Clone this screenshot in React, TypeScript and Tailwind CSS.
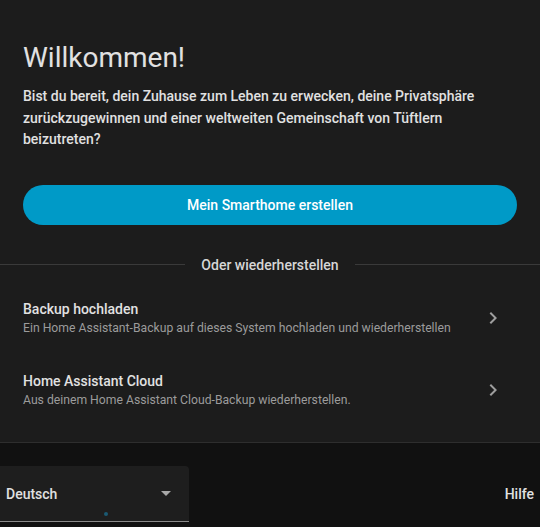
import React from "react"

const Chevron = () => (
  <svg viewBox="0 0 24 24" className="w-6 h-6 shrink-0" fill="#9e9e9e">
    <path d="M8.59,16.58L13.17,12L8.59,7.41L10,6L16,12L10,18L8.59,16.58Z" />
  </svg>
)

function RestoreItem({ title, sub }: { title: string; sub: string }) {
  return (
    <div className="flex items-center pl-[23px] pr-[35px] py-[17px]">
      <div className="flex-1">
        <div className="text-sm font-medium leading-5 text-[#e1e1e1]">{title}</div>
        <div className="text-[12.2px] leading-[18px] text-[#9b9b9b]">{sub}</div>
      </div>
      <Chevron />
    </div>
  )
}

export default function App() {
  return (
    <div className="w-[540px] h-[527px] bg-[#111111] overflow-hidden" style={{ fontFamily: "Roboto, 'Liberation Sans', sans-serif" }}>
      <div className="bg-[#1c1c1c] border-b border-[#2e2e2e] pb-4 h-[443px]">
        <div className="px-[23px] pt-[42px]">
          <h1 className="text-[28px] leading-8 font-normal text-[#e1e1e1]">Willkommen!</h1>
          <p className="mt-[12px] text-sm font-medium leading-[21.5px] text-[#e1e1e1]">
            Bist du bereit, dein Zuhause zum Leben zu erwecken, deine Privatsphäre zurückzugewinnen und einer weltweiten Gemeinschaft von Tüftlern beizutreten?
          </p>
          <button className="mt-[34px] w-full h-10 rounded-full bg-[#009ac7] text-white text-sm font-medium">
            Mein Smarthome erstellen
          </button>
        </div>

        <div className="mt-[30px] flex items-center gap-4">
          <div className="flex-1 h-px bg-[#3a3a3a]" />
          <span className="text-sm font-medium leading-5 text-[#d6d6d6]">Oder wiederherstellen</span>
          <div className="flex-1 h-px bg-[#3a3a3a]" />
        </div>

        <div className="mt-[7px]">
          <RestoreItem title="Backup hochladen" sub="Ein Home Assistant-Backup auf dieses System hochladen und wiederherstellen" />
          <RestoreItem title="Home Assistant Cloud" sub="Aus deinem Home Assistant Cloud-Backup wiederherstellen." />
        </div>
      </div>

      <div className="flex items-center justify-between pt-[23px]">
        <div className="relative w-[189px] h-[56px] bg-[#1e1e1e] rounded-tr border-b border-[#8a8a8a] flex items-center pl-[6px] pr-[18px]">
          <span className="flex-1 text-sm font-medium text-[#e1e1e1]">Deutsch</span>
          <svg viewBox="0 0 10 5" className="w-[10px] h-[5px]" fill="#a8a8a8">
            <path d="M0 0L10 0L5 5Z" />
          </svg>
          <span className="absolute left-[104px] bottom-[5px] w-[4px] h-[4px] rounded-full bg-[#1b5a73]" />
        </div>
        <span className="pr-[6px] text-sm font-medium text-[#e1e1e1]">Hilfe</span>
      </div>
    </div>
  )
}
